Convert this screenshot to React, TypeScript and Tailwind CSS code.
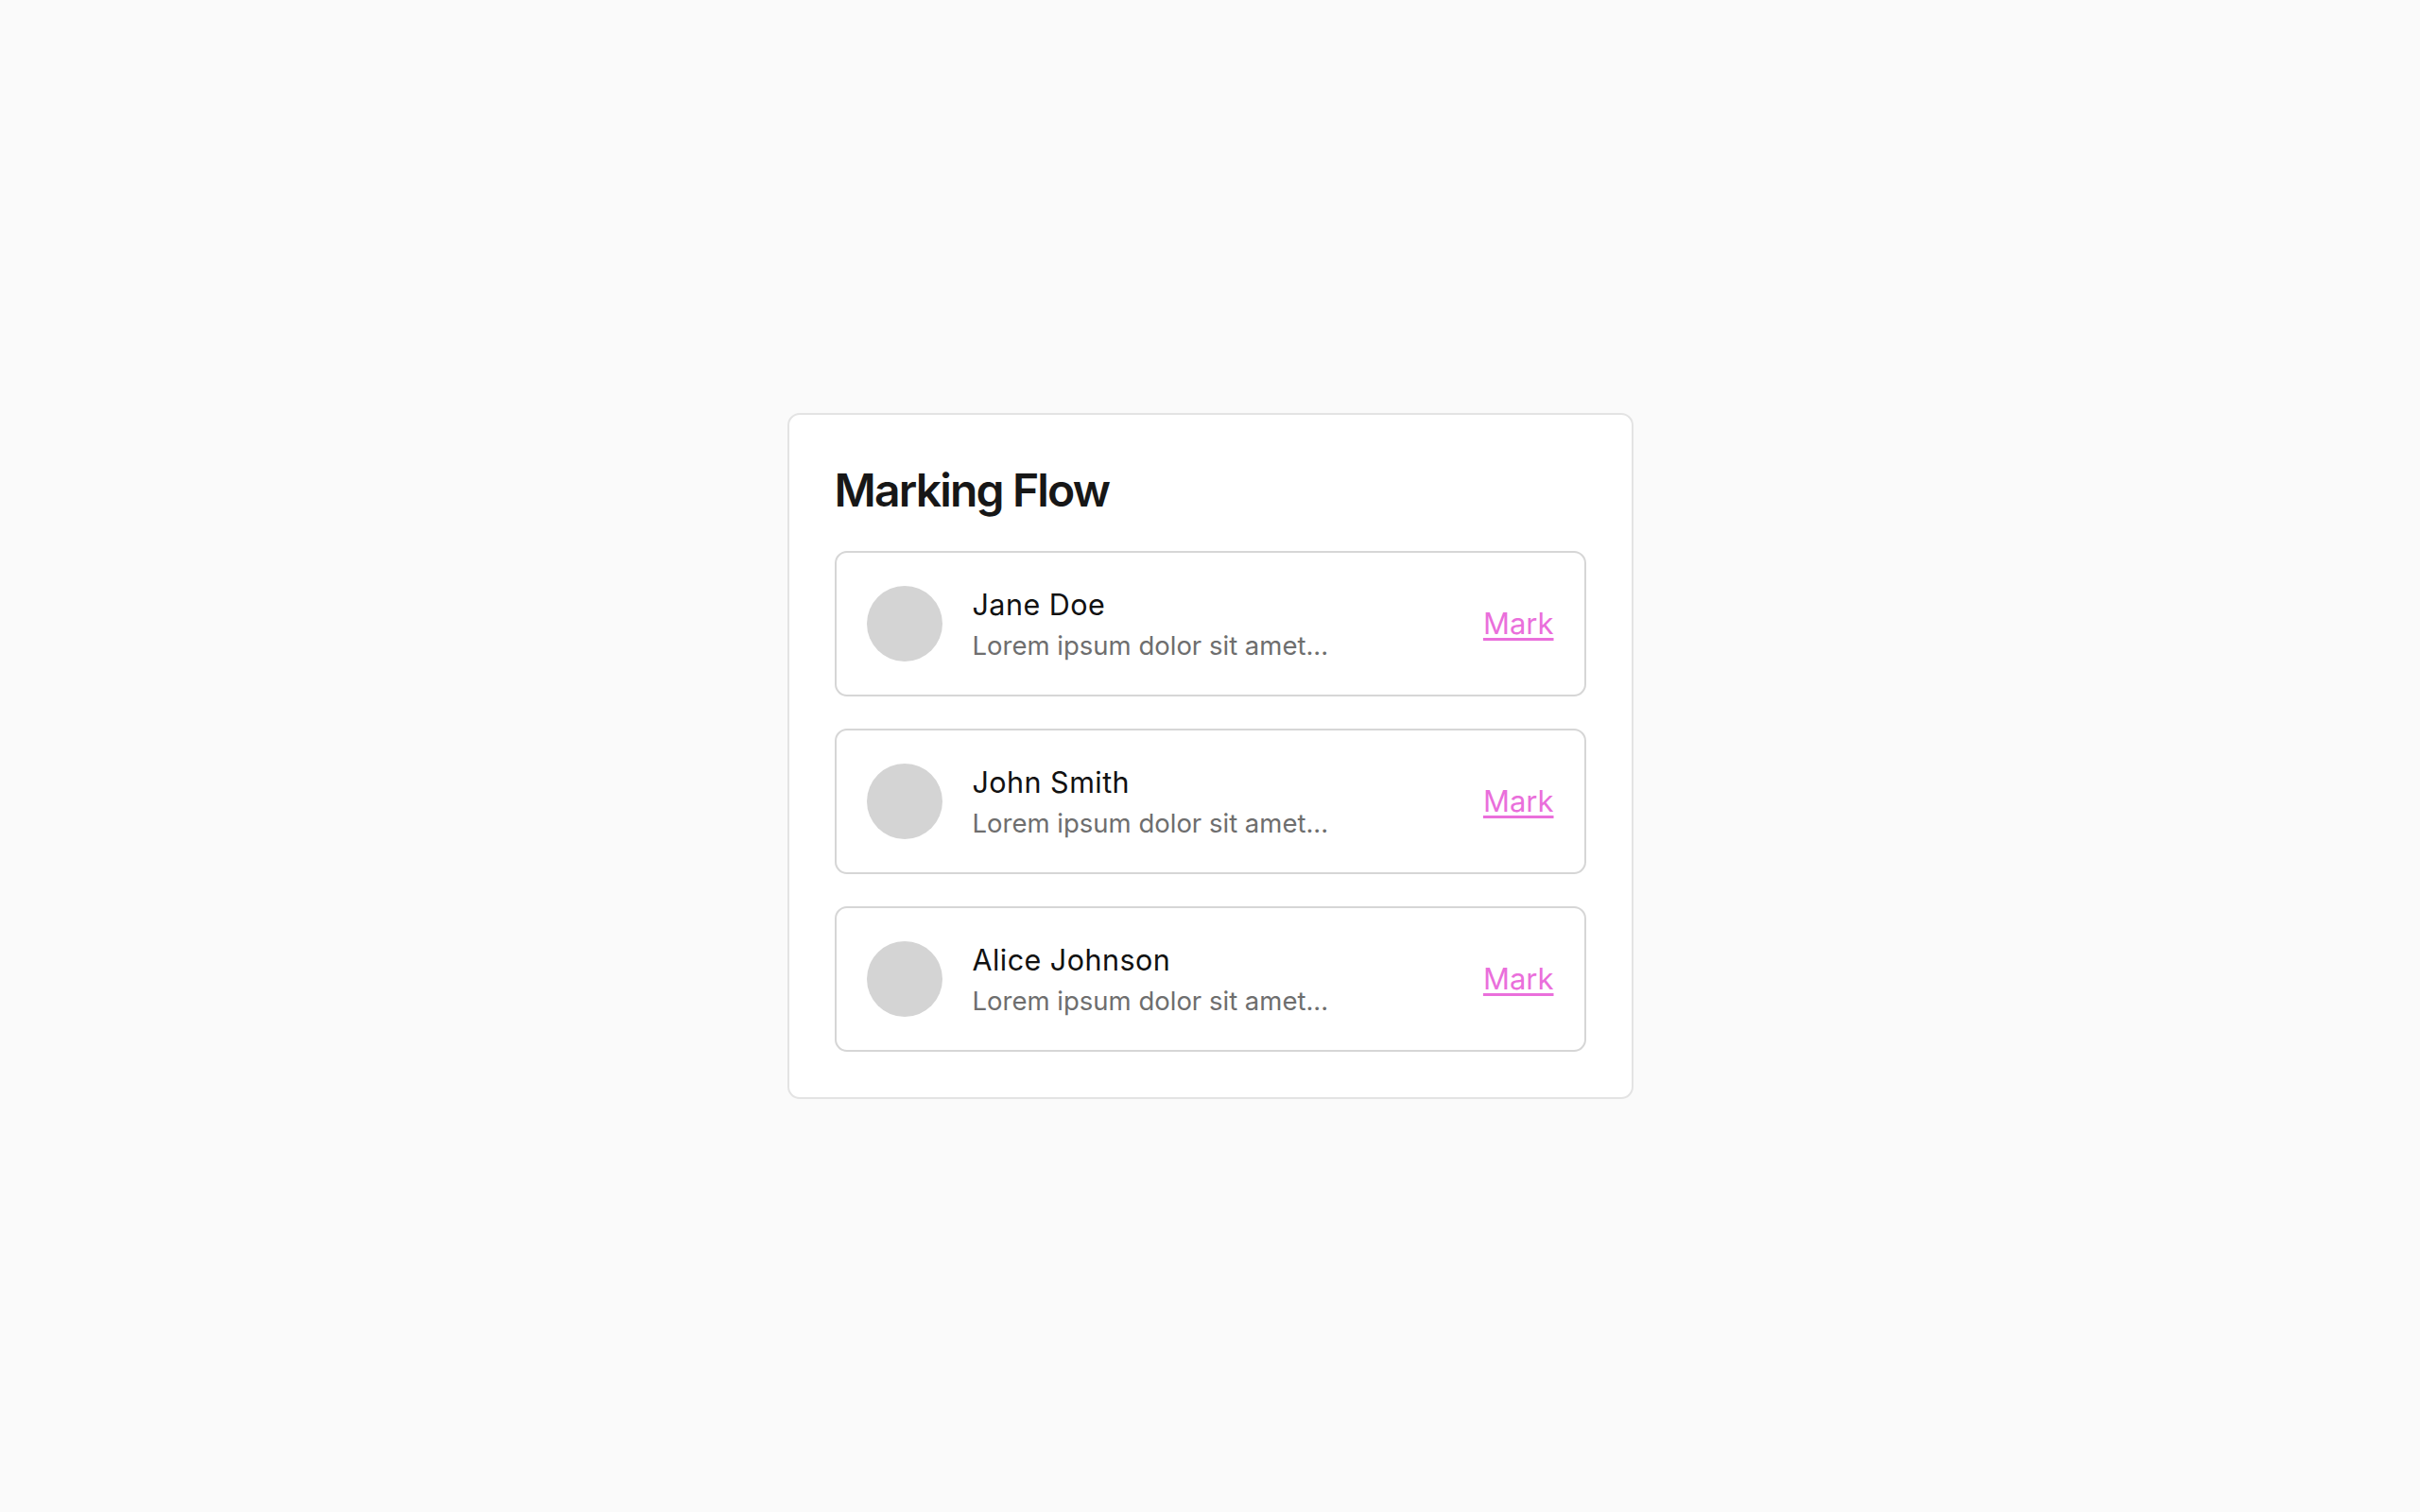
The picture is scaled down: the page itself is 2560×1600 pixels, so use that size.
const people = [
  { name: "Jane Doe", note: "Lorem ipsum dolor sit amet..." },
  { name: "John Smith", note: "Lorem ipsum dolor sit amet..." },
  { name: "Alice Johnson", note: "Lorem ipsum dolor sit amet..." },
];

function PersonRow({ name, note }: { name: string; note: string }) {
  return (
    <div className="flex h-[154px] items-center rounded-[13px] border-2 border-[#d6d6d6] bg-white px-[32px]">
      <div className="h-[80px] w-[80px] shrink-0 rounded-full bg-[#d4d4d4]" />
      <div className="ml-[32px] flex-1">
        <div className="mt-[2px] text-[30.5px] leading-[40px] font-normal tracking-[0.015em] text-[#111111]">{name}</div>
        <div className="mt-[4px] text-[27.5px] leading-[38px] text-[#6e6e6e]">{note}</div>
      </div>
      <a href="#" className="text-[31px] leading-[40px] text-[#ea6fdb] underline underline-offset-[4px]">
        Mark
      </a>
    </div>
  );
}

export default function App() {
  return (
    <div
      className="flex min-h-screen items-center justify-center bg-[#fafafa]"
      style={{ fontFamily: "Inter, 'Noto Sans', sans-serif" }}
    >
      <div className="w-[895px] rounded-[13px] border-2 border-[#e3e3e3] bg-white p-[48px]">
        <h1 className="mb-[32px] text-[48px] leading-[64px] font-semibold tracking-[-0.038em] text-[#171717]">
          Marking Flow
        </h1>
        <div className="flex flex-col gap-[34px]">
          {people.map(p => (
            <PersonRow key={p.name} name={p.name} note={p.note} />
          ))}
        </div>
      </div>
    </div>
  );
}
